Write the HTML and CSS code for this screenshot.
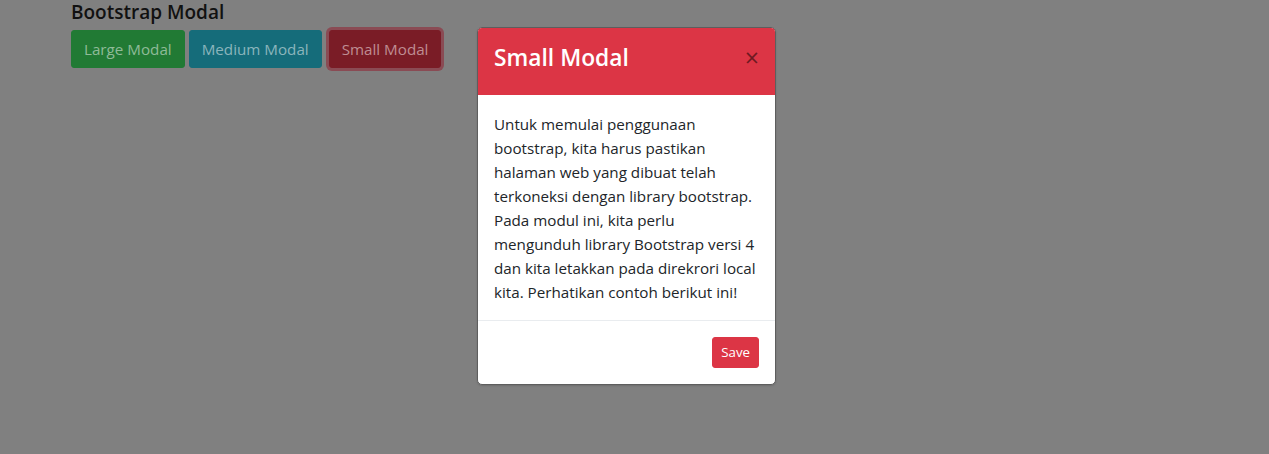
FILE: index.html
```html
<!DOCTYPE html>
<html lang="id">
<head>
    <meta charset="UTF-8">
    <meta name="viewport" content="width=device-width, initial-scale=1.0">
    <title>Bootstrap Modal</title>
    <link rel="stylesheet" href="styles.css">
</head>
<body>

<div class="container">
    <h4 class="judul">Bootstrap Modal</h4>
    <div class="tombol-grup">
        <button class="btn btn-success">Large Modal</button>
        <button class="btn btn-info">Medium Modal</button>
        <button class="btn btn-danger aktif">Small Modal</button>
    </div>
</div>

<div class="modal-sm">
    <div class="modal-header">
        <h4 class="modal-title">Small Modal</h4>
        <button class="close">&times;</button>
    </div>
    <div class="modal-body">
        <p>Untuk memulai penggunaan bootstrap, kita harus pastikan halaman web yang dibuat telah terkoneksi dengan library bootstrap. Pada modul ini, kita perlu mengunduh library Bootstrap versi 4 dan kita letakkan pada direkrori local kita. Perhatikan contoh berikut ini!</p>
    </div>
    <div class="modal-footer">
        <button class="btn-save">Save</button>
    </div>
</div>

</body>
</html>
```

FILE: styles.css
```css
:root {
    --danger: #dc3545;
    --text: #212529;
    --backdrop: #808080;
}
body {
    font-family: 'Open Sans', sans-serif;
    background: var(--backdrop);
    margin: 0;
    color: var(--text);
    min-height: 454px;
}
.container { padding: 1px 0 0 71px; }
.judul {
    margin: 0 0 7px;
    font-size: 19px;
    font-weight: 600;
    line-height: 22px;
    color: #111;
}
.tombol-grup { display: flex; gap: 4px; }
.btn {
    font-family: inherit;
    font-size: 15.2px;
    line-height: 24px;
    padding: 6px 12px;
    border: 1px solid transparent;
    border-radius: 3px;
    cursor: pointer;
}
.btn-success { background: #217a34; border-color: #217a34; color: #8fbb98; }
.btn-info { background: #156c7a; border-color: #156c7a; color: #8bb5bc; }
.btn-danger { background: #7a1c26; border-color: #7a1c26; color: #bf8d93; }
.aktif { margin-left: 3px; box-shadow: 0 0 0 3px #8a4b54; }

.modal-sm {
    position: absolute;
    top: 27px;
    left: 477px;
    width: 299px;
    box-sizing: border-box;
    background: #fff;
    border: 1px solid #5e5e5e;
    border-radius: 5px;
    overflow: hidden;
    box-shadow: 0 1px 2px rgba(0,0,0,0.15);
}
.modal-header {
    background: var(--danger);
    display: flex;
    justify-content: space-between;
    align-items: flex-start;
    padding: 12px 16px 20px;
}
.modal-title {
    margin: 0;
    font-size: 22.8px;
    font-weight: 600;
    line-height: 35px;
    color: #fff;
}
.close {
    background: none;
    border: none;
    padding: 0;
    margin-top: 5px;
    font-family: inherit;
    font-size: 25px;
    font-weight: 400;
    line-height: 24px;
    color: #000;
    opacity: 0.5;
    cursor: pointer;
}
.modal-body { padding: 17px 16px 16px; }
.modal-body p {
    margin: 0;
    font-size: 15.2px;
    line-height: 24px;
}
.modal-footer {
    border-top: 1px solid #e9ecef;
    padding: 12px;
    display: flex;
    justify-content: flex-end;
}
.btn-save {
    margin: 4px;
    background: var(--danger);
    color: #fff;
    border: 1px solid var(--danger);
    border-radius: 3px;
    padding: 4px 8px;
    font-family: inherit;
    font-size: 13.3px;
    line-height: 21px;
    cursor: pointer;
}
```
